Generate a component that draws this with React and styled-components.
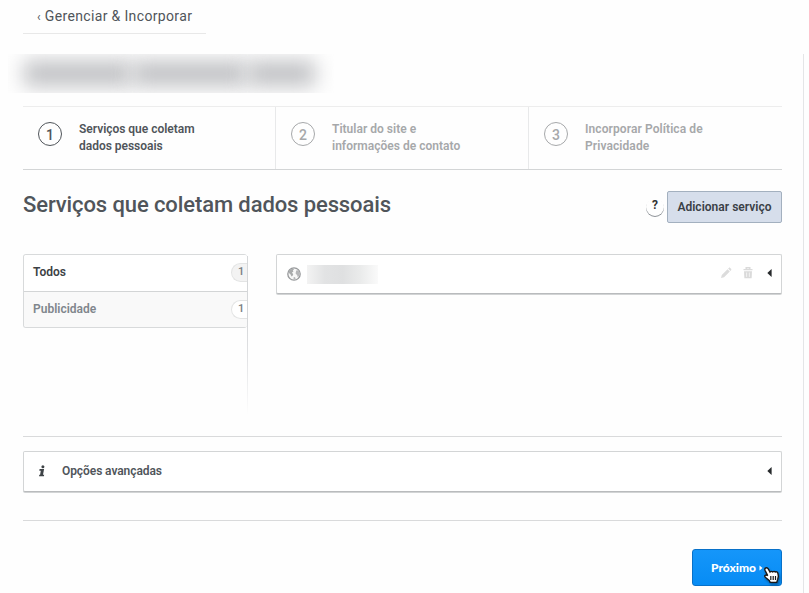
import React from 'react';
import styled, { createGlobalStyle } from 'styled-components';

const steps = [
  { number: 1, lines: ['Serviços que coletam', 'dados pessoais'], spacing: -0.02, active: true },
  { number: 2, lines: ['Titular do site e', 'informações de contato'], spacing: 0.02 },
  { number: 3, lines: ['Incorporar Política de', 'Privacidade'], spacing: 0.09 },
];

const categories = [
  { name: 'Todos', count: 1, active: true },
  { name: 'Publicidade', count: 1 },
];

function GlobeIcon() {
  return (
    <svg width="14" height="14" viewBox="0 0 14 14">
      <circle cx="7" cy="7" r="6.2" fill="#f7f7f7" stroke="#97999b" strokeWidth="1.3" />
      <path d="M2.6 3 6 1.5 7 2.6 5.8 3.6 6.4 4.8 4.9 5.5 6.2 7.2 5.6 8.8 4.6 9.4 3.4 7.2 1.6 5.8Z" fill="#a9abac" />
      <path d="M9.2 3.4 11.2 3.2 12.8 5.6 12.4 8.6 10.8 10.2 10.2 8.2 8.6 6.6ZM6.4 10.6 8 10 8.6 12 6.8 12.6Z" fill="#b5b6b8" />
    </svg>
  );
}

function PencilIcon() {
  return (
    <svg width="12" height="12" viewBox="0 0 12 12" fill="#dcdcdc">
      <path d="m1 11 .8-3.1 5.7-5.7 2.3 2.3-5.7 5.7ZM8.1 1.6l.7-.7c.4-.4 1-.4 1.4 0l.9.9c.4.4.4 1 0 1.4l-.7.7Z" />
    </svg>
  );
}

function TrashIcon() {
  return (
    <svg width="10" height="12" viewBox="0 0 10 12">
      <path d="M3.2 2V.8h3.6V2M.5 2.6h9" fill="none" stroke="#dadada" strokeWidth="1.4" />
      <path d="M1 4.3h8l-.4 7H1.4Z" fill="#dadada" />
      <path d="M3.6 5.5v4.4M6.4 5.5v4.4" stroke="#f2f2f2" />
    </svg>
  );
}

function InfoIcon() {
  return (
    <svg width="6" height="12" viewBox="0 0 6 12" fill="#3f4447">
      <circle cx="3.9" cy="1.7" r="1.5" />
      <path d="M.6 4.1h4.5L4 9.7h1.2l-.3 1.6H0l.3-1.6h.8L1.8 5.7H.3Z" />
    </svg>
  );
}

function Caret() {
  return (
    <svg width="5" height="8" viewBox="0 0 5 8">
      <path d="M4.6 0v8L.3 4Z" fill="#272a2c" />
    </svg>
  );
}

function HandCursor() {
  return (
    <Cursor width="18" height="20" viewBox="0 0 18 20">
      <path
        d="M1.6 1C2.8.5 3.8 1 4.4 2.1L6 5C6.8 4.2 8 4.2 8.7 4.9 9.5 4.2 10.7 4.3 11.3 5 12.2 4.5 13.4 4.9 13.8 5.9L14.4 9.2 13.7 12.4 12.7 15.4H6.2L5.2 13.4 1.9 10.8C.8 10 .4 9.1 1 8.4 1.7 7.7 2.8 7.9 3.7 8.6L1 3.2C.6 2.2.8 1.3 1.6 1Z"
        fill="#fff"
        stroke="#171717"
        strokeWidth="1.4"
      />
      <path d="M6.8 9v4M9.2 9v4M11.5 9v4" fill="none" stroke="#171717" strokeWidth="1.2" />
    </Cursor>
  );
}

export default function App() {
  return (
    <Page>
      <GlobalStyle />
      <BackLink>
        <span>‹</span> Gerenciar &amp; Incorporar
      </BackLink>
      <Main>
        <HiddenName>
          <Smudge $width={108} />
          <Smudge $width={114} />
          <Smudge $width={67} />
        </HiddenName>
        <Steps>
          {steps.map(step => (
            <Step key={step.number} $active={step.active}>
              <StepNumber>{step.number}</StepNumber>
              <StepLabel $spacing={step.spacing}>
                {step.lines.map(line => (
                  <div key={line}>{line}</div>
                ))}
              </StepLabel>
            </Step>
          ))}
        </Steps>
        <Heading>
          <Title>Serviços que coletam dados pessoais</Title>
          <Help>?</Help>
          <AddButton>Adicionar serviço</AddButton>
        </Heading>
        <Services>
          <Sidebar>
            <CategoryList>
              {categories.map(category => (
                <Category key={category.name} $active={category.active}>
                  <CategoryName>{category.name}</CategoryName>
                  <Count $active={category.active}>{category.count}</Count>
                </Category>
              ))}
            </CategoryList>
            <SidebarEdge />
          </Sidebar>
          <ServiceCard>
            <GlobeIcon />
            <HiddenService />
            <Actions>
              <PencilIcon />
              <TrashIcon />
              <Caret />
            </Actions>
          </ServiceCard>
        </Services>
        <AdvancedRow>
          <AdvancedCard>
            <InfoIcon />
            <AdvancedLabel>Opções avançadas</AdvancedLabel>
            <Caret />
          </AdvancedCard>
        </AdvancedRow>
        <Footer>
          <NextButton>
            Próximo
            <svg width="4" height="6" viewBox="0 0 4 6">
              <path d="M.5.6 3.5 3 .5 5.4Z" fill="#fff" />
            </svg>
            <HandCursor />
          </NextButton>
        </Footer>
      </Main>
    </Page>
  );
}

const GlobalStyle = createGlobalStyle`
  * {
    box-sizing: border-box;
  }

  body {
    margin: 0;
    background: #fff;
    overflow: hidden;
  }

  svg {
    display: block;
    flex: none;
  }
`;

const Page = styled.div`
  width: 809px;
  height: 593px;
  background: #fefefe;
  color: #50555a;
  font-family: Roboto, 'Liberation Sans', sans-serif;
  font-size: 13px;
  overflow: hidden;
`;

const BackLink = styled.div`
  width: 183px;
  height: 34px;
  margin-left: 23px;
  padding-left: 14px;
  border-bottom: 1px solid #e8e8e8;
  font-size: 14px;
  line-height: 33px;
  letter-spacing: 0.35px;
  white-space: nowrap;

  span {
    font-size: 12px;
  }
`;

const Main = styled.main`
  width: 804px;
  height: 539px;
  margin-top: 20px;
  padding: 0 21px 0 23px;
  border-right: 1px solid #e4e5e7;
`;

const HiddenName = styled.div`
  display: flex;
  align-items: center;
  gap: 1px;
  width: 326px;
  height: 39px;
  margin-left: -15px;
  padding-left: 16px;
  overflow: hidden;
`;

const Smudge = styled.div`
  flex: none;
  width: ${props => props.$width}px;
  height: 25px;
  background: #bfc0c3;
  filter: blur(10px);
`;

const Steps = styled.div`
  display: grid;
  grid-template-columns: 252px 253px 254px;
  height: 64px;
  margin-top: 13px;
  border-top: 1px solid #ededed;
  border-bottom: 1px solid #d3d5d6;
`;

const Step = styled.div`
  display: flex;
  align-items: flex-start;
  padding: 14px 0 0 15px;
  color: ${props => (props.$active ? '#50555a' : '#a6a8aa')};

  & + & {
    border-left: 1px solid #e8e9ea;
  }
`;

const StepNumber = styled.div`
  width: 24px;
  height: 24px;
  margin-top: 1px;
  border: 1px solid currentColor;
  border-radius: 50%;
  font-size: 14px;
  font-weight: 500;
  line-height: 24px;
  text-align: center;
`;

const StepLabel = styled.div`
  margin-left: 17px;
  font-size: 12px;
  font-weight: 600;
  line-height: 17px;
  letter-spacing: ${props => props.$spacing}px;
  white-space: nowrap;
`;

const Heading = styled.div`
  display: flex;
  align-items: center;
  height: 32px;
  margin-top: 21px;
`;

const Title = styled.h1`
  flex: 1;
  margin: -5px 0 0;
  font-size: 22px;
  font-weight: 500;
  letter-spacing: -0.1px;
  white-space: nowrap;
`;

const Help = styled.div`
  width: 18px;
  height: 18px;
  margin: 0 3px 0 0;
  border-radius: 50%;
  box-shadow: 0 1px 0 #8d9297;
  color: #333;
  font-size: 12px;
  font-weight: 700;
  line-height: 15px;
  text-align: center;
`;

const AddButton = styled.button`
  width: 115px;
  height: 32px;
  padding: 0;
  border: 1px solid #a3b0bf;
  border-radius: 2px;
  background: #d6deeb;
  color: #3a4046;
  font: 600 12px Roboto, sans-serif;
  letter-spacing: 0.03px;
  white-space: nowrap;
`;

const Services = styled.div`
  display: grid;
  grid-template-columns: 225px 506px;
  column-gap: 28px;
  align-items: start;
  height: 182px;
  margin-top: 31px;
`;

const Sidebar = styled.div`
  display: flex;
  height: 162px;
`;

const CategoryList = styled.div`
  width: 224px;
  height: 74px;
  border: 1px solid #d8dadb;
  border-right: 0;
  border-radius: 3px;
  overflow: hidden;
`;

const SidebarEdge = styled.div`
  width: 1px;
  margin-top: 2px;
  background: linear-gradient(#d5d7d9 40%, #dfe0e2 60%, transparent);
`;

const Category = styled.div`
  display: flex;
  align-items: center;
  justify-content: space-between;
  height: 36px;
  padding: 0 0 1px 9px;
  background: ${props => (props.$active ? '#fff' : '#f9f9f9')};
  color: ${props => (props.$active ? '#3c4144' : '#80868c')};
  font-size: 12px;
  font-weight: 600;

  & + & {
    height: 37px;
    border-top: 1px solid #d3d5d6;
  }
`;

const CategoryName = styled.span`
  padding-bottom: 2px;
`;

const Count = styled.span`
  width: 16px;
  height: 19px;
  padding-left: 6px;
  border: 1px solid #e3e4e4;
  border-right: 0;
  border-radius: 10px 0 0 10px;
  background: ${props => (props.$active ? '#f3f3f3' : '#fff')};
  color: #797d80;
  font-size: 11px;
  font-weight: 500;
  line-height: 16px;
`;

const Card = styled.div`
  display: flex;
  align-items: center;
  border: 1px solid #d3d5d6;
  border-bottom-color: #b9bbbd;
  border-radius: 2px;
  background: #fff;
  box-shadow: 0 1px 0 #d2d4d5;
`;

const ServiceCard = styled(Card)`
  height: 40px;
  padding: 0 9px 0 10px;
`;

const HiddenService = styled.div`
  width: 71px;
  height: 19px;
  margin-left: 6px;
  background: linear-gradient(90deg, #f3f3f3, #e2e3e4 25%, #dfe0e1 50%, #eaebeb 75%, #fafafa);
`;

const Actions = styled.div`
  display: flex;
  align-items: center;
  gap: 11px;
  margin-left: auto;
  padding-bottom: 2px;

  svg:last-child {
    margin-left: 3px;
  }
`;

const AdvancedRow = styled.div`
  height: 85px;
  padding-top: 14px;
  border-top: 1px solid #d9dadb;
  border-bottom: 1px solid #d9dadb;
`;

const AdvancedCard = styled(Card)`
  height: 41px;
  padding: 0 9px 2px 15px;
`;

const AdvancedLabel = styled.div`
  flex: 1;
  margin-left: 17px;
  font-size: 12px;
  font-weight: 600;
  letter-spacing: -0.08px;
`;

const Footer = styled.div`
  display: flex;
  justify-content: flex-end;
  padding-top: 28px;
`;

const NextButton = styled.button`
  position: relative;
  display: flex;
  align-items: center;
  gap: 3px;
  width: 90px;
  height: 37px;
  padding: 0 0 0 18px;
  border: 1px solid #0871c9;
  border-radius: 3px;
  background: linear-gradient(#1596fa, #078cf4);
  color: #fff;
  font: 900 12px Lato, sans-serif;
`;

const Cursor = styled.svg`
  position: absolute;
  left: 71px;
  top: 17px;
  filter: drop-shadow(1px 2px 1px rgba(0, 0, 0, 0.35));
`;
